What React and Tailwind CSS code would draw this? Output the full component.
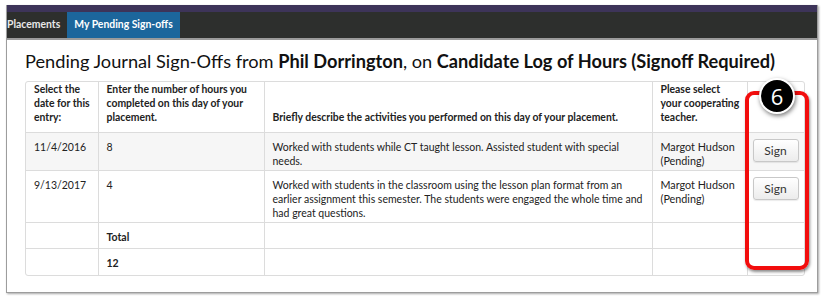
const rows = [
  {
    date: "11/4/2016",
    hours: "8",
    desc: ["Worked with students while CT taught lesson. Assisted student with special", "needs."],
    teacher: ["Margot Hudson", "(Pending)"],
    h: "h-[38px]",
    bg: "bg-[#f6f6f6]",
  },
  {
    date: "9/13/2017",
    hours: "4",
    desc: [
      "Worked with students in the classroom using the lesson plan format from an",
      "earlier assignment this semester. The students were engaged the whole time and",
      "had great questions.",
    ],
    teacher: ["Margot Hudson", "(Pending)"],
    h: "h-[52px]",
    bg: "bg-white",
  },
];

const cell = "border-l border-[#dcdcdc] first:border-l-0 align-top pl-[8px] pr-[3px] pt-[7px]";
const signCell = "border-l border-[#dcdcdc] align-top pl-[5px] pt-[6px]";
const head = "border-l border-[#dcdcdc] first:border-l-0 align-bottom pl-[8px] pr-[2px] pb-[8px] text-[10.4px] font-bold text-left";

export default function App() {
  return (
    <div className="w-[823px] h-[297px] bg-white relative overflow-hidden font-['Lato',sans-serif] text-[#222]">
      <div className="ml-[6px] mt-[5px] w-[812px] h-[288px] border-l border-r border-b border-[#9d9d9d] shadow-[1px_1px_2px_rgba(0,0,0,0.35)] bg-white">
        <div className="h-[7px] bg-[#3d3459]" />
        <div className="h-[26px] bg-[#2d2f2d] flex items-stretch text-[10.4px] font-bold text-[#e8e8e8] border-b-2 border-[#9b9b9b] box-content">
          <div className="flex items-center pr-[7px]">Placements</div>
          <div className="flex items-center px-[7px] bg-[#1c669c] text-white">My Pending Sign-offs</div>
        </div>

        <div className="pl-[18px] pr-[12px]">
          <h1 className="mt-[9px] text-[18.2px] leading-[24px] text-[#111]">
            Pending Journal Sign-Offs from <span className="font-bold">Phil Dorrington</span>, on{" "}
            <span className="font-bold">Candidate Log of Hours (Signoff Required)</span>
          </h1>

          <div className="mt-[8px] w-[780px] border border-[#dcdcdc] rounded-[3px] overflow-hidden">
            <table className="w-full border-collapse table-fixed text-[10.5px] leading-[14px]">
              <colgroup>
                <col className="w-[72px]" />
                <col className="w-[166px]" />
                <col className="w-[388px]" />
                <col className="w-[95px]" />
                <col />
              </colgroup>
              <thead>
                <tr className="h-[50px]">
                  <th className={head}>Select the<br />date for this<br />entry:</th>
                  <th className={head}>Enter the number of hours you<br />completed on this day of your<br />placement.</th>
                  <th className={head}>Briefly describe the activities you performed on this day of your placement.</th>
                  <th className={head}>Please select<br />your cooperating<br />teacher.</th>
                  <th className={head}></th>
                </tr>
              </thead>
              <tbody>
                {rows.map((r) => (
                  <tr key={r.date} className={`${r.h} ${r.bg} border-t border-[#dcdcdc]`}>
                    <td className={cell}>{r.date}</td>
                    <td className={cell}>{r.hours}</td>
                    <td className={cell}>
                      {r.desc.map((line) => (
                        <div key={line} className="whitespace-nowrap">{line}</div>
                      ))}
                    </td>
                    <td className={`${cell} text-[10.8px]`}>
                      {r.teacher[0]}
                      <br />
                      {r.teacher[1]}
                    </td>
                    <td className={signCell}>
                      <button className="w-[46px] h-[23px] rounded-[3px] border border-[#c8c8c8] bg-gradient-to-b from-white to-[#ececec] text-[12px] text-[#333] shadow-[0_1px_1px_rgba(0,0,0,0.08)]">
                        Sign
                      </button>
                    </td>
                  </tr>
                ))}
                <tr className="h-[26px] border-t border-[#dcdcdc]">
                  <td className={cell}></td>
                  <td className={`${cell} font-bold`}>Total</td>
                  <td className={cell}></td>
                  <td className={cell}></td>
                  <td className={cell}></td>
                </tr>
                <tr className="h-[26px] border-t border-[#dcdcdc]">
                  <td className={cell}></td>
                  <td className={`${cell} font-bold`}>12</td>
                  <td className={cell}></td>
                  <td className={cell}></td>
                  <td className={cell}></td>
                </tr>
              </tbody>
            </table>
          </div>
        </div>
      </div>

      {/* annotation overlay */}
      <div className="absolute left-[745px] top-[91px] w-[64px] h-[179px] border-[4px] border-[#f20d0d] rounded-[9px] shadow-[1px_2px_3px_rgba(0,0,0,0.45)]" />
      <div className="absolute left-[759px] top-[78px] w-[36px] h-[36px] rounded-full bg-black border-[2px] border-white shadow-[1px_2px_4px_rgba(0,0,0,0.5)] flex items-center justify-center text-white text-[22px] font-['Open_Sans',sans-serif]">
        6
      </div>
    </div>
  );
}
